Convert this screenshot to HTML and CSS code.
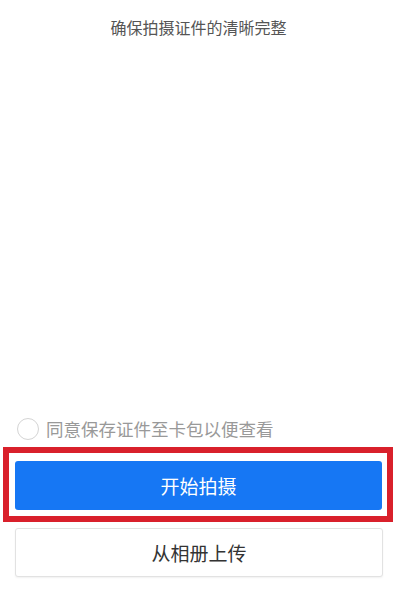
FILE: index.html
```html
<!DOCTYPE html>
<html lang="zh">
<head>
    <meta charset="UTF-8">
    <meta name="viewport" content="width=device-width, initial-scale=1.0">
    <title>证件拍摄</title>
    <link rel="stylesheet" href="styles.css">
</head>
<body>

    <div class="page">
        <p class="tip">确保拍摄证件的清晰完整</p>

        <div class="actions">
            <label class="agree">
                <span class="circle"></span>
                <span class="agree-text">同意保存证件至卡包以便查看</span>
            </label>

            <!-- 高亮框 -->
            <div class="highlight">
                <button class="btn btn-primary">开始拍摄</button>
            </div>

            <button class="btn btn-plain">从相册上传</button>
        </div>
    </div>

</body>
</html>
```

FILE: styles.css
```css
body {
    margin: 0;
    padding: 0;
    background-color: #fff;
    font-family: "Noto Sans CJK SC", "Noto Sans", sans-serif;
}

.page {
    height: 600px;
    display: flex;
    flex-direction: column;
}

.tip {
    margin: 15px 0 0;
    text-align: center;
    font-size: 16px;
    line-height: 24px;
    color: #555;
}

.actions {
    margin-top: auto;
    padding-bottom: 23px;
}

.agree {
    display: flex;
    align-items: center;
    padding-left: 17px;
    height: 24px;
    margin-bottom: 6px;
}

.circle {
    width: 20px;
    height: 20px;
    border: 1px solid #d4d4d4;
    border-radius: 50%;
    margin-right: 7px;
}

.agree-text {
    font-size: 17.5px;
    color: #999;
    line-height: 24px;
}

.highlight {
    margin: 0 4px 0 3px;
    border: 6px solid #d9202b;
    padding: 8px 5px 6px 6px;
}

.btn {
    display: block;
    width: 100%;
    height: 49px;
    font-family: inherit;
    font-size: 19px;
    border-radius: 3px;
    cursor: pointer;
}

.btn-primary {
    background-color: #1677f4;
    color: #fff;
    border: none;
}

.btn-plain {
    width: 368px;
    margin: 6px 0 0 15px;
    background-color: #fff;
    color: #333;
    border: 1px solid #e2e2e2;
    box-shadow: 0 1px 2px rgba(0, 0, 0, 0.06);
}
```
